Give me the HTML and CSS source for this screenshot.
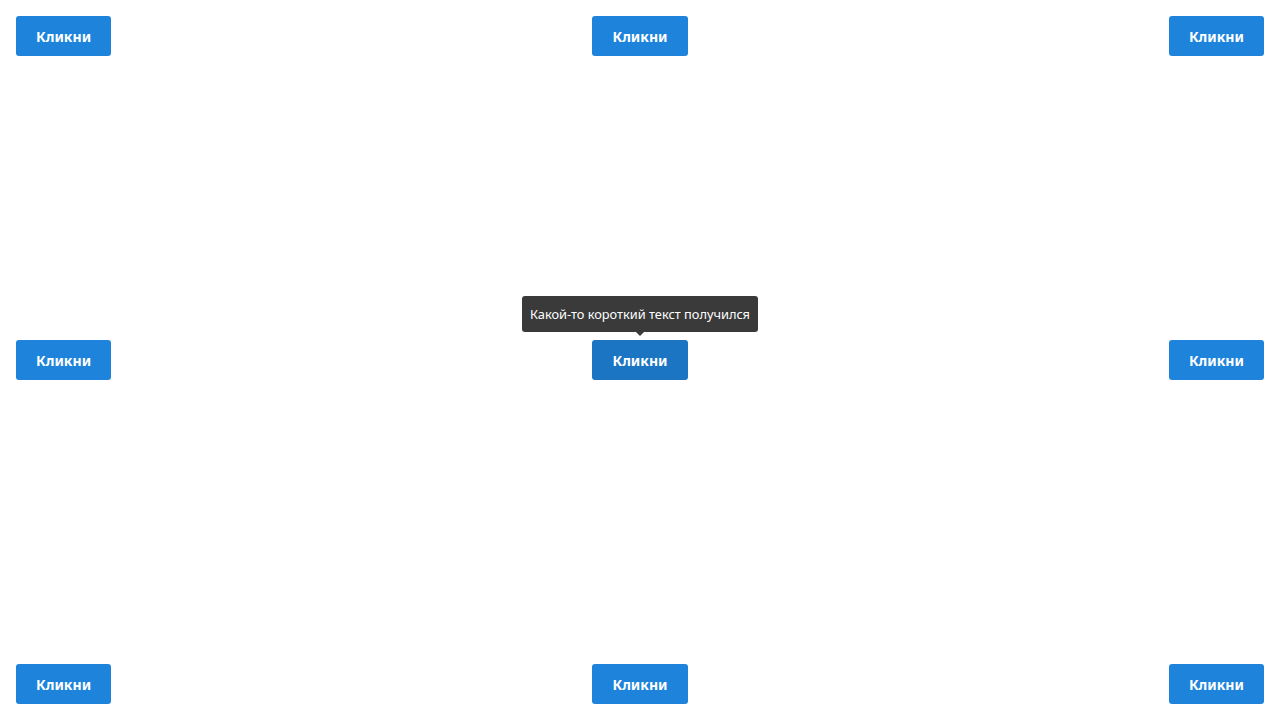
FILE: index.html
```html
<!DOCTYPE html>
<html lang="ru">
<head>
<meta charset="utf-8">
<title>Tooltips</title>
<link rel="stylesheet" href="styles.css">
</head>
<body>
<div class="board">
  <div class="cell start"><button class="btn">Кликни</button></div>
  <div class="cell center"><button class="btn">Кликни</button></div>
  <div class="cell end"><button class="btn">Кликни</button></div>
  <div class="cell start"><button class="btn">Кликни</button></div>
  <div class="cell center">
    <div class="anchor">
      <button class="btn hover">Кликни</button>
      <div class="tooltip">Какой-то короткий текст получился</div>
    </div>
  </div>
  <div class="cell end"><button class="btn">Кликни</button></div>
  <div class="cell start"><button class="btn">Кликни</button></div>
  <div class="cell center"><button class="btn">Кликни</button></div>
  <div class="cell end"><button class="btn">Кликни</button></div>
</div>
</body>
</html>
```
FILE: styles.css
```css
html, body {
  margin: 0;
  padding: 0;
  background: #fff;
}
body {
  font-family: "Noto Sans", "Open Sans", sans-serif;
}
.board {
  box-sizing: border-box;
  height: 720px;
  padding: 16px;
  display: grid;
  grid-template-columns: 1fr 1fr 1fr;
  align-content: space-between;
}
.cell { display: flex; }
.cell.start { justify-content: flex-start; }
.cell.center { justify-content: center; }
.cell.end { justify-content: flex-end; }
.anchor { position: relative; }
.btn {
  display: block;
  box-sizing: border-box;
  height: 40px;
  padding: 2px 20px 0;
  border: none;
  border-radius: 3px;
  background: #1e84db;
  color: #fff;
  font-family: "Noto Sans", "Open Sans", sans-serif;
  font-weight: 700;
  font-size: 14px;
  line-height: 38px;
  cursor: pointer;
}
.btn.hover { background: #1b75c2; }
.tooltip {
  position: absolute;
  left: 50%;
  bottom: 48px;
  transform: translateX(-50%);
  box-sizing: border-box;
  height: 36px;
  padding: 0 8px;
  border-radius: 3px;
  background: #3a3a3a;
  color: #fff;
  font-family: "Noto Sans", "Open Sans", sans-serif;
  font-size: 12.8px;
  line-height: 36px;
  white-space: nowrap;
}
.tooltip::after {
  content: "";
  position: absolute;
  left: 50%;
  top: 100%;
  margin-left: -4px;
  border-left: 4px solid transparent;
  border-right: 4px solid transparent;
  border-top: 4px solid #3a3a3a;
}
```
